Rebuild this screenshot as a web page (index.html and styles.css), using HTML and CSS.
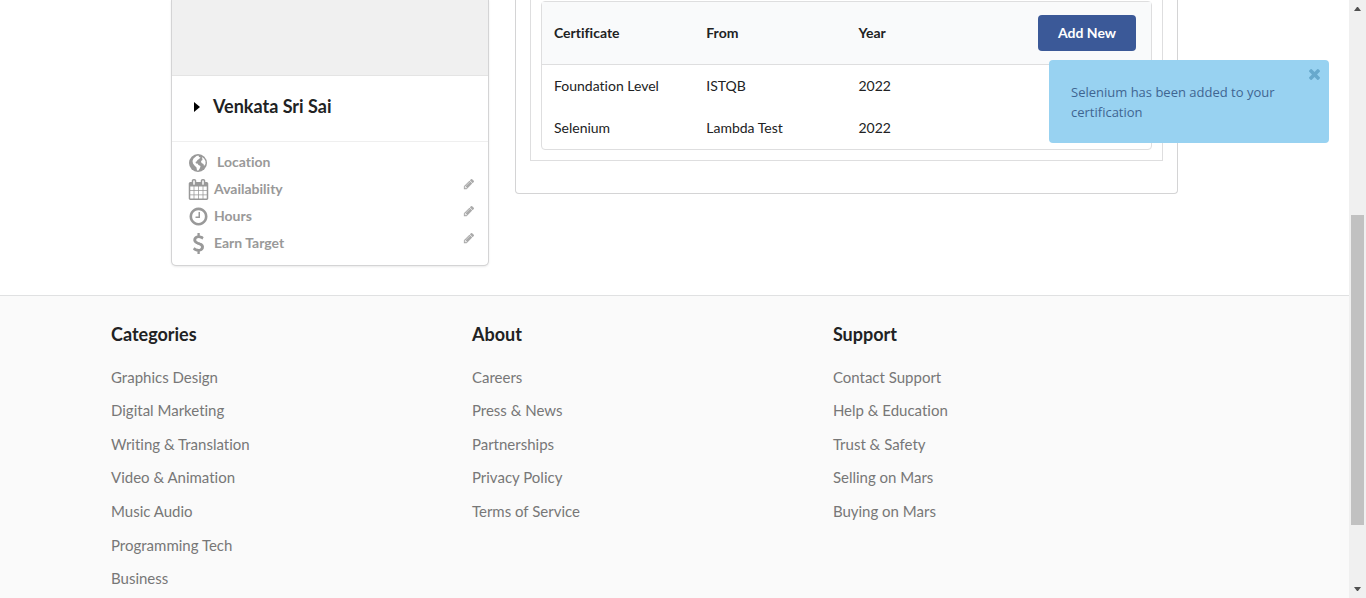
FILE: index.html
```html
<!DOCTYPE html>
<html lang="en">
<head>
<meta charset="utf-8">
<title>Profile</title>
<link rel="stylesheet" href="styles.css">
</head>
<body>
<svg class="defs" aria-hidden="true">
  <symbol id="pencil" viewBox="0 0 1792 1792"><path d="M491 1536l91-91-235-235-91 91v107h128v128h107zm523-928q0-22-22-22-10 0-17 7l-542 542q-7 7-7 17 0 22 22 22 10 0 17-7l542-542q7-7 7-17zm-54-192l416 416-832 832h-416v-416zm683 96q0 53-37 90l-166 166-416-416 166-165q36-38 90-38 53 0 91 38l235 234q37 39 37 91z"/></symbol>
</svg>
<div class="page">
  <main class="profile">
    <aside class="card">
      <div class="photo"></div>
      <div class="name"><svg class="caret" viewBox="0 0 6 10" aria-hidden="true"><path d="M0 0l6 5-6 5z"/></svg><h2>Venkata Sri Sai</h2></div>
      <ul class="facts">
        <li class="location">
          <svg class="icon" viewBox="0 0 18 18" aria-hidden="true"><circle cx="9" cy="9" r="9"/><path class="land" d="M7.500 2L9.500 1.500 10 3 11.500 3.500 10 5 8.500 6 7.500 7.500 6.500 8 7 9.500 8.500 9.500 9.500 11 11.500 12 11 14 9.500 16.500 8 16.500 7.500 13.500 5.500 11.500 4 9.500 3.500 7 4.500 4.500Z M13 3L15 4.500 16.500 7 16.500 10 15 12 14.500 10 12.500 9 12 7 13.500 6Z"/></svg>
          <span>Location</span>
        </li>
        <li>
          <svg class="icon wide" viewBox="0 0 1792 1792" aria-hidden="true"><path d="M192 1664h288v-288h-288v288zm352 0h320v-288h-320v288zm-352-352h288v-320h-288v320zm352 0h320v-320h-320v320zm-352-384h288v-288h-288v288zm736 736h320v-288h-320v288zm-384-736h320v-288h-320v288zm768 736h288v-288h-288v288zm-384-352h320v-320h-320v320zm-352-864v-288q0-13-9.500-22.500t-22.500-9.500h-64q-13 0-22.500 9.500t-9.500 22.500v288q0 13 9.500 22.500t22.500 9.500h64q13 0 22.500-9.500t9.500-22.500zm736 864h288v-320h-288v320zm-384-384h320v-288h-320v288zm384 0h288v-288h-288v288zm32-480v-288q0-13-9.500-22.500t-22.500-9.500h-64q-13 0-22.500 9.500t-9.500 22.500v288q0 13 9.500 22.500t22.500 9.500h64q13 0 22.500-9.500t9.500-22.500zm384-64v1280q0 52-38 90t-90 38h-1408q-52 0-90-38t-38-90v-1280q0-52 38-90t90-38h128v-96q0-66 47-113t113-47h64q66 0 113 47t47 113v96h384v-96q0-66 47-113t113-47h64q66 0 113 47t47 113v96h128q52 0 90 38t38 90z"/></svg>
          <span>Availability</span>
          <button class="edit" type="button" aria-label="Edit availability"><svg><use href="#pencil"/></svg></button>
        </li>
        <li>
          <svg class="icon wide" viewBox="0 0 1792 1792" aria-hidden="true"><path d="M1024 544v448q0 14-9 23t-23 9h-320q-14 0-23-9t-9-23v-64q0-14 9-23t23-9h224v-352q0-14 9-23t23-9h64q14 0 23 9t9 23zm416 352q0-148-73-273t-198-198-273-73-273 73-198 198-73 273 73 273 198 198 273 73 273-73 198-198 73-273zm224 0q0 209-103 385.500t-279.500 279.500-385.500 103-385.500-103-279.500-279.500-103-385.500 103-385.500 279.500-279.500 385.500-103 385.500 103 279.500 279.500 103 385.500z"/></svg>
          <span>Hours</span>
          <button class="edit" type="button" aria-label="Edit hours"><svg><use href="#pencil"/></svg></button>
        </li>
        <li>
          <svg class="icon wide" viewBox="0 0 1792 1792" aria-hidden="true"><path d="M1362 1185q0 153-99.500 263.500t-258.500 136.500v175q0 14-9 23t-23 9h-135q-13 0-22.500-9.500t-9.500-22.500v-175q-66-9-127.500-31t-101.500-44.500-74-48-46.500-37.500-17.500-18q-17-21-2-41l103-135q7-10 23-12 15-2 24 9l2 2q113 99 243 125 37 8 74 8 81 0 142.500-43t61.500-122q0-28-15-53t-33.500-42-58.500-37.500-66-32-80-32.500q-39-16-61.500-25t-61.500-26.500-62.500-31-56.500-35.500-53.500-42.500-43.500-49-35.500-58-21-66.500-8.500-78q0-138 98-242t255-134v-180q0-13 9.500-22.500t22.500-9.500h135q14 0 23 9t9 23v176q57 6 110.500 23t87 33.500 63.500 37.500 39 29 15 14q17 18 5 38l-81 146q-8 15-23 16-14 3-27-7-3-3-14.500-12t-39-26.500-58.500-32-74.500-26-85.500-11.500q-95 0-155 43t-60 111q0 26 8.500 48t29.500 41.500 39.500 33 56 31 60.500 27 70 27.500q53 20 81 31.500t76 35 75.500 42.500 62 50 53 63.500 31.500 76.500 13 94z"/></svg>
          <span>Earn Target</span>
          <button class="edit" type="button" aria-label="Edit earn target"><svg><use href="#pencil"/></svg></button>
        </li>
      </ul>
    </aside>
    <section class="panel">
      <div class="tab">
        <table class="certs">
          <thead><tr><th>Certificate</th><th>From</th><th>Year</th><th class="action"><button class="add" type="button">Add New</button></th></tr></thead>
          <tbody>
            <tr><td>Foundation Level</td><td>ISTQB</td><td>2022</td><td></td></tr>
            <tr><td>Selenium</td><td>Lambda Test</td><td>2022</td><td></td></tr>
          </tbody>
        </table>
      </div>
    </section>
  </main>
  <footer class="footer">
    <div class="columns">
      <nav><h3>Categories</h3><div class="links"><a href="#">Graphics Design</a><a href="#">Digital Marketing</a><a href="#">Writing &amp; Translation</a><a href="#">Video &amp; Animation</a><a href="#">Music Audio</a><a href="#">Programming Tech</a><a href="#">Business</a></div></nav>
      <nav><h3>About</h3><div class="links"><a href="#">Careers</a><a href="#">Press &amp; News</a><a href="#">Partnerships</a><a href="#">Privacy Policy</a><a href="#">Terms of Service</a></div></nav>
      <nav><h3>Support</h3><div class="links"><a href="#">Contact Support</a><a href="#">Help &amp; Education</a><a href="#">Trust &amp; Safety</a><a href="#">Selling on Mars</a><a href="#">Buying on Mars</a></div></nav>
    </div>
  </footer>
</div>
<div class="scrollbar" aria-hidden="true">
  <svg viewBox="0 0 7 4"><path d="M0 4L3 0h1l3 4z"/></svg>
  <div class="track"><div class="thumb"></div></div>
  <svg viewBox="0 0 7 4"><path d="M0 0L3 4h1l3-4z"/></svg>
</div>
<div class="toast" role="status">
  <p>Selenium has been added to your certification</p>
  <button class="close" type="button" aria-label="Close"><svg viewBox="302 366 1188 1188"><path d="M1490 1322q0 40-28 68l-136 136q-28 28-68 28t-68-28l-294-294-294 294q-28 28-68 28t-68-28l-136-136q-28-28-28-68t28-68l294-294-294-294q-28-28-28-68t28-68l136-136q28-28 68-28t68 28l294 294 294-294q28-28 68-28t68 28l136 136q28 28 28 68t-28 68l-294 294 294 294q28 28 28 68z"/></svg></button>
</div>
</body>
</html>
```
FILE: styles.css
```css
* { box-sizing: border-box; }
body {
  margin: 0;
  display: flex;
  min-height: 100vh;
  background: #fff;
  color: #212223;
  font: 14px/20px Lato, "Liberation Sans", sans-serif;
  font-variant-ligatures: none;
}
h2, h3, p, ul { margin: 0; padding: 0; }
button { font: inherit; border: 0; cursor: pointer; }
.defs { position: absolute; width: 0; height: 0; }
.page { flex: 1; display: flex; flex-direction: column; }

.profile {
  display: grid;
  grid-template-columns: 316fr 663fr;
  gap: 27px;
  align-items: start;
  padding: 0 171px 30px 172px;
}
.card {
  border-radius: 0 0 4px 4px;
  box-shadow: 0 1px 3px 0 #d4d4d5, 0 0 0 1px #d4d4d5;
}
.photo { height: 76px; background: #f0f0f0; border-bottom: 1px solid #e4e4e4; }
.name {
  display: flex;
  align-items: center;
  gap: 13px;
  padding: 18px 22px 22px;
  border-bottom: 1px solid #efefef;
}
.name h2 { font-size: 18px; line-height: 25px; font-weight: 700; }
.caret { width: 6px; height: 10px; }
.facts { list-style: none; padding: 7px 13px 8px; color: #999; font-weight: 700; }
.facts li { display: flex; align-items: center; height: 27px; gap: 7px; }
.facts span { flex: 1; padding-bottom: 2px; }
.facts .location { gap: 10px; padding-left: 4px; }
.icon { width: 18px; height: 18px; fill: #999; }
.icon.wide { width: 21px; height: 21px; margin-left: 3px; margin-right: -2px; }
.land { fill: #fff; }
.edit { padding: 2px 0 0; background: none; display: flex; align-self: flex-start; }
.edit svg { width: 12px; height: 12px; fill: #aaa; }

.panel { padding: 0 14px 32px; border: 1px solid #d4d4d5; border-top: 0; border-radius: 0 0 4px 4px; }
.tab { padding: 1px 10px 10px; border: 1px solid #dededf; border-top: 0; }
.certs {
  width: 100%;
  table-layout: fixed;
  border: 1px solid #dededf;
  border-radius: 4px;
  border-spacing: 0;
  text-align: left;
}
.certs th { height: 63px; padding: 0 12px; background: #f9fafb; border-bottom: 1px solid #dededf; font-weight: 700; }
.certs td { height: 42px; padding: 0 12px; color: #212223; }
.certs .action { padding: 0 15px; text-align: right; }
.add { height: 36px; padding: 0 20px; border-radius: 4px; background: #3b5998; color: #fff; font-weight: 700; }

.footer { flex: 1; background: #fafafa; border-top: 1px solid #e0e1e2; }
.columns { display: grid; grid-template-columns: 5fr 5fr 5fr 1fr; padding: 26px 83px 0 111px; }
.columns h3 { margin-bottom: 14px; font-size: 18px; line-height: 24px; font-weight: 700; }
.links { display: grid; grid-template-rows: repeat(7, 1fr); height: 235px; align-items: center; justify-items: start; }
.links a { color: #777; font-size: 15px; line-height: 20px; text-decoration: none; }

.scrollbar { width: 17px; background: #f0f0f0; display: flex; flex-direction: column; align-items: center; gap: 7px; padding: 7px 0; }
.scrollbar svg { width: 7px; height: 4px; fill: #505050; }
.track { flex: 1; align-self: stretch; padding: 0 2px; display: grid; grid-template-rows: 197fr 310fr 55fr; }
.thumb { grid-row: 2; background: #c1c1c1; }

.toast {
  position: absolute;
  top: 60px;
  right: 37px;
  width: 280px;
  padding: 22px 22px 21px;
  border-radius: 4px;
  background: #98d2f1;
  color: #3f6591;
  font-family: "Open Sans", sans-serif;
  font-size: 13px;
}
.close { position: absolute; top: 9px; right: 9px; padding: 0; background: none; display: flex; }
.close svg { width: 11px; height: 11px; fill: #68a9cd; }
```
